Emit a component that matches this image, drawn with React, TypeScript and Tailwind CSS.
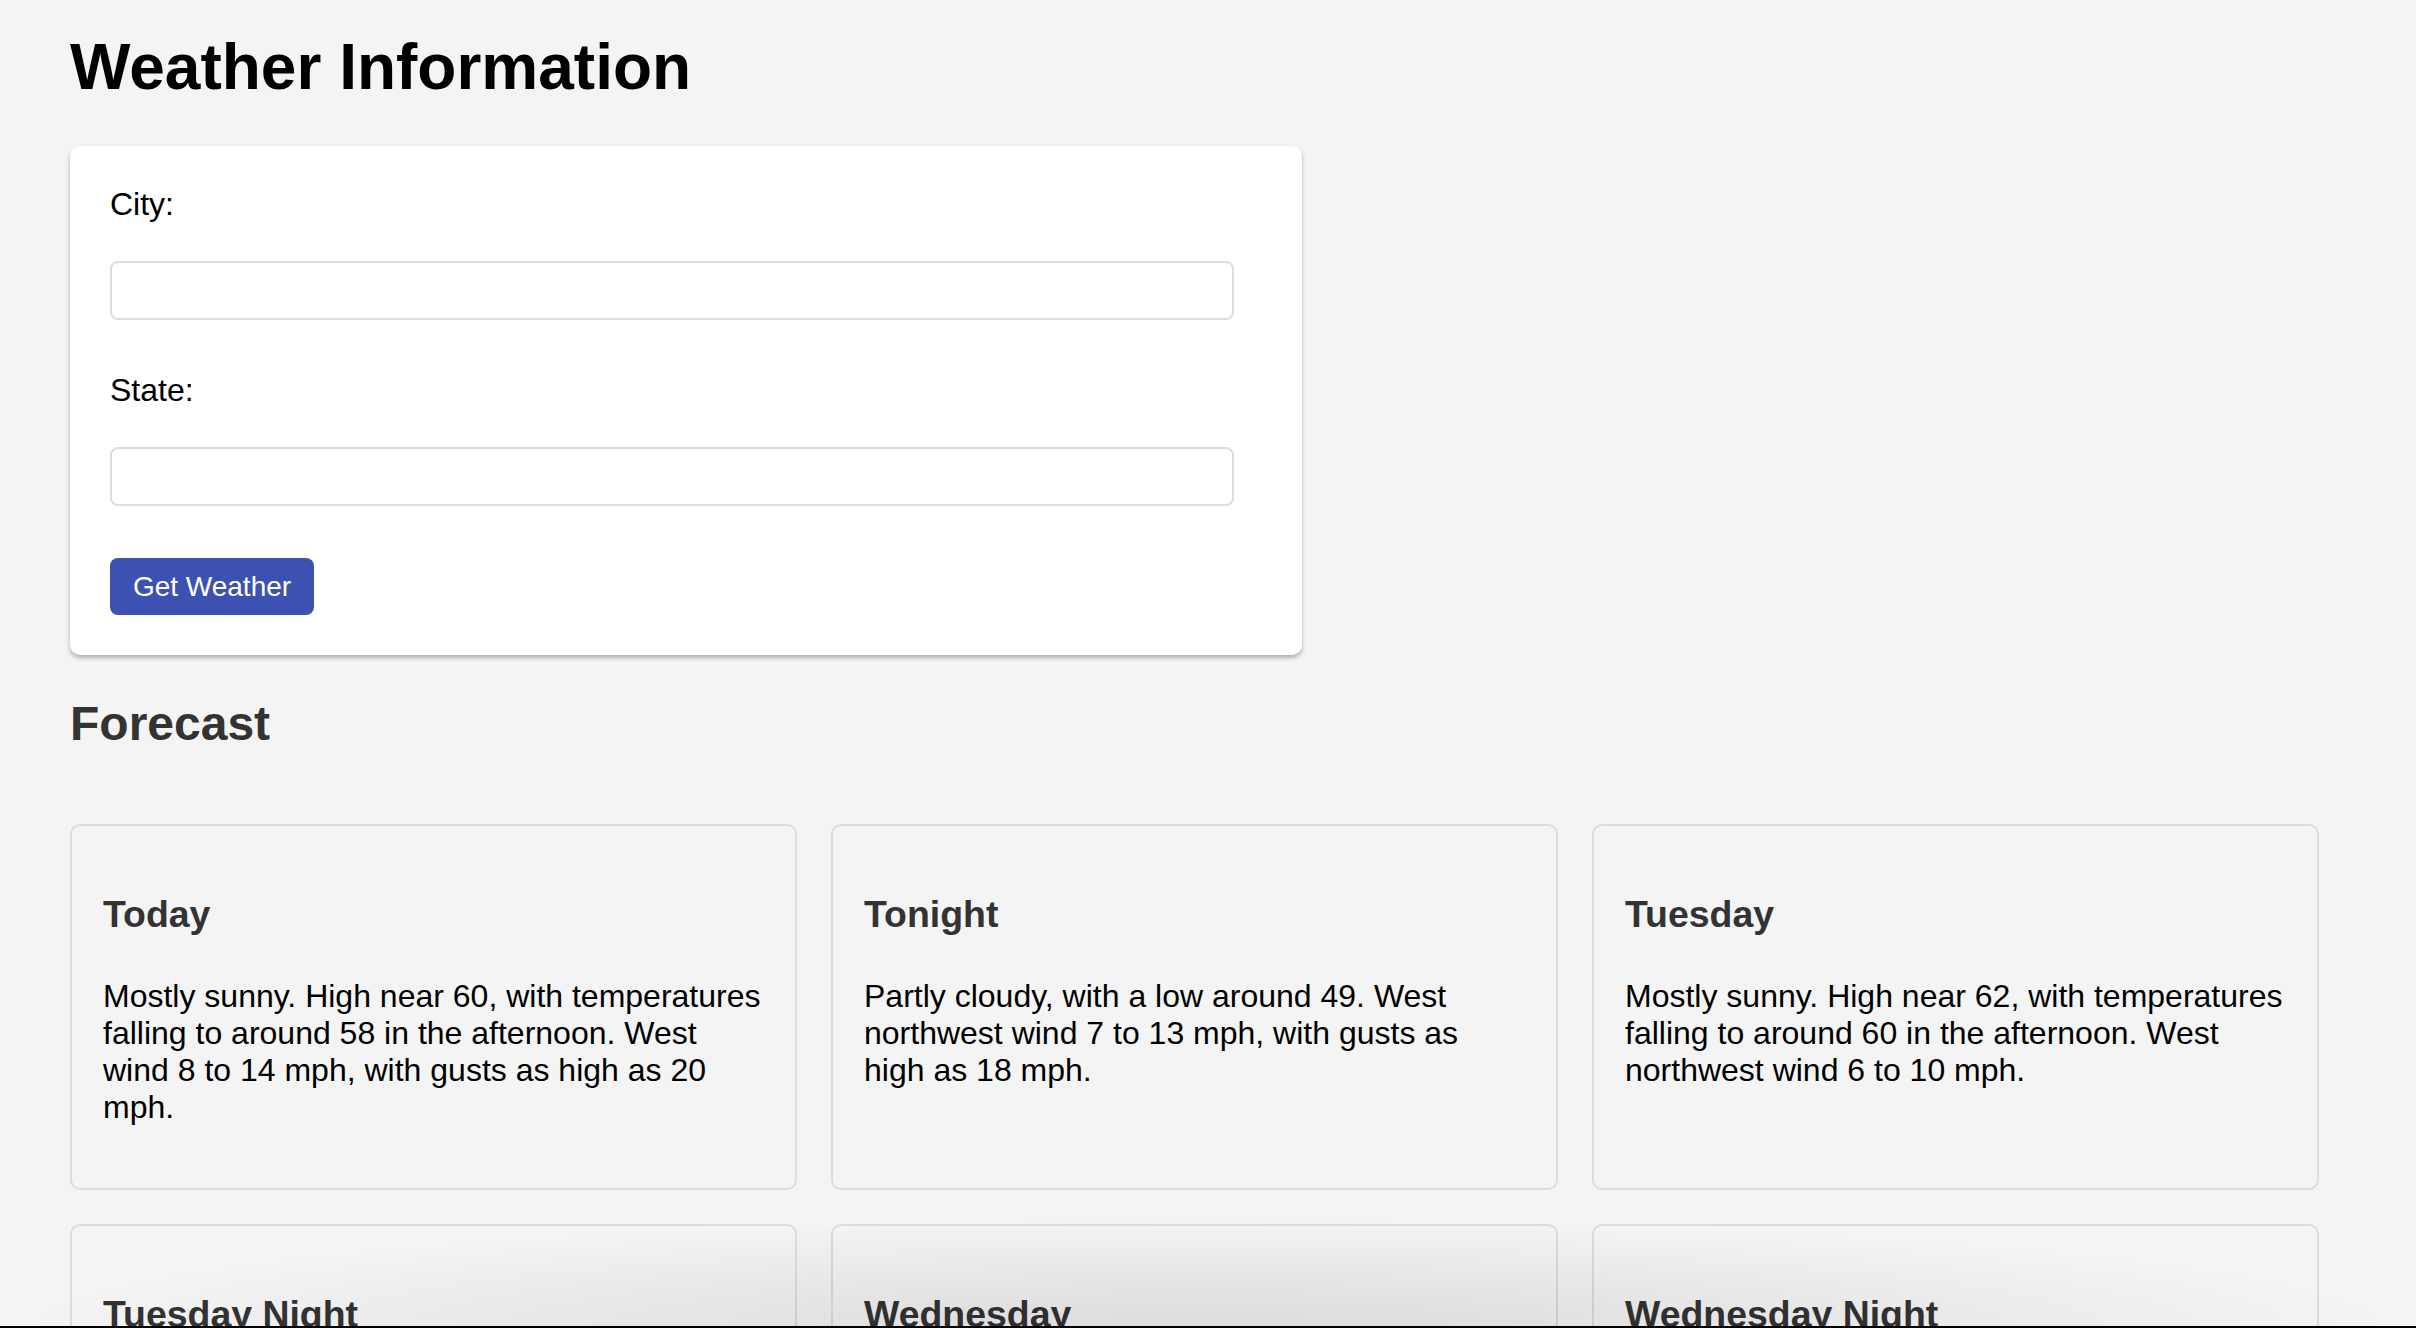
import React from "react";

type Period = { name: string; text: string };

const periods: Period[] = [
  {
    name: "Today",
    text: "Mostly sunny. High near 60, with temperatures falling to around 58 in the afternoon. West wind 8 to 14 mph, with gusts as high as 20 mph.",
  },
  {
    name: "Tonight",
    text: "Partly cloudy, with a low around 49. West northwest wind 7 to 13 mph, with gusts as high as 18 mph.",
  },
  {
    name: "Tuesday",
    text: "Mostly sunny. High near 62, with temperatures falling to around 60 in the afternoon. West northwest wind 6 to 10 mph.",
  },
  {
    name: "Tuesday Night",
    text: "Mostly clear, with a low around 47. West wind 5 to 9 mph.",
  },
  {
    name: "Wednesday",
    text: "Sunny, with a high near 64. Northwest wind 5 to 10 mph.",
  },
  {
    name: "Wednesday Night",
    text: "Clear, with a low around 48. West northwest wind around 7 mph.",
  },
];

function Field({ label, first }: { label: string; first?: boolean }) {
  return (
    <div className={first ? "" : "mt-[52px]"}>
      <label className="block text-[32px] leading-[37px] text-black">{label}</label>
      <input
        type="text"
        className="mt-[38px] block w-[1124px] h-[59px] rounded-[8px] border-2 border-[#dddddd] bg-white px-4 text-[32px] outline-none"
      />
    </div>
  );
}

export default function App() {
  return (
    <div className="min-h-screen bg-[#f4f4f4] pl-[70px] pt-[30px] pb-[60px] font-['Liberation_Sans',Arial,sans-serif] text-black">
      <h1 className="text-[64px] leading-[74px] font-bold text-black">Weather Information</h1>

      <div className="mt-[42px] w-[1232px] rounded-[10px] bg-white px-[40px] pt-[40px] pb-[40px] shadow-[0_3px_4px_rgba(0,0,0,0.28)]">
        <Field label="City:" first />
        <Field label="State:" />
        <button
          type="button"
          className="mt-[52px] flex h-[57px] w-[204px] items-center justify-center rounded-[8px] bg-[#3d51b3] text-[28px] text-white"
        >
          Get Weather
        </button>
      </div>

      <h2 className="mt-[41px] text-[48px] leading-[55px] font-bold text-[#333333]">Forecast</h2>

      <div className="mt-[73px] grid grid-cols-[repeat(3,727px)] gap-[34px]">
        {periods.map((p) => (
          <div key={p.name} className="rounded-[10px] border-2 border-[#dddddd] bg-[#f4f4f4] px-[31px] pt-[30px] pb-[32px]">
            <h3 className="mt-[37px] text-[37.44px] leading-[43px] font-bold text-[#333333]">{p.name}</h3>
            <p className="mt-[42px] mb-[30px] text-[32px] leading-[37px] text-black">{p.text}</p>
          </div>
        ))}
      </div>

      <div className="pointer-events-none fixed bottom-0 left-0 right-0 h-[110px] bg-[radial-gradient(ellipse_at_bottom,rgba(0,0,0,0.1),transparent_70%)]" />
      <div className="pointer-events-none fixed bottom-0 left-0 right-0 h-[2px] bg-black" />
    </div>
  );
}
